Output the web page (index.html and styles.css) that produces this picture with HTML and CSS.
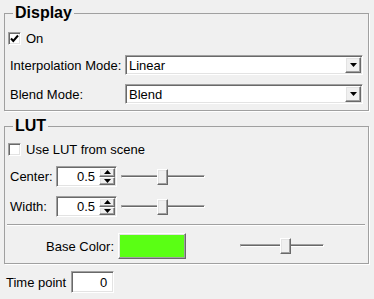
FILE: index.html
```html
<!DOCTYPE html>
<html lang="en">

<head>
    <meta charset="UTF-8">
    <title>Display Properties</title>
    <link rel="stylesheet" href="styles.css">
</head>

<body>
    <fieldset class="group group-display">
        <legend>Display</legend>
        <div class="check-row">
            <span class="checkbox">
                <svg width="9" height="9" viewBox="0 0 9 9"><path d="M1 4.5 L3.3 7 L8 1.5" fill="none" stroke="#000" stroke-width="2"/></svg>
            </span>
            <span>On</span>
        </div>
        <div class="form-grid">
            <span class="field-label">Interpolation Mode:</span>
            <div class="combo">
                <span class="combo-text">Linear</span>
                <span class="raised combo-button">
                    <svg width="7" height="4" viewBox="0 0 7 4"><path d="M0 0 H7 L3.5 4 Z" fill="#000"/></svg>
                </span>
            </div>
            <span class="field-label">Blend Mode:</span>
            <div class="combo">
                <span class="combo-text">Blend</span>
                <span class="raised combo-button">
                    <svg width="7" height="4" viewBox="0 0 7 4"><path d="M0 0 H7 L3.5 4 Z" fill="#000"/></svg>
                </span>
            </div>
        </div>
    </fieldset>

    <fieldset class="group group-lut">
        <legend>LUT</legend>
        <div class="check-row">
            <span class="checkbox"></span>
            <span>Use LUT from scene</span>
        </div>
        <div class="spin-rows">
            <div class="spin-row">
                <span class="spin-label">Center:</span>
                <div class="spin">
                    <span class="spin-value">0.5</span>
                    <span class="spin-buttons">
                        <span class="raised spin-button"><svg width="7" height="4" viewBox="0 0 7 4"><path d="M0 4 H7 L3.5 0 Z" fill="#000"/></svg></span>
                        <span class="raised spin-button"><svg width="7" height="4" viewBox="0 0 7 4"><path d="M0 0 H7 L3.5 4 Z" fill="#000"/></svg></span>
                    </span>
                </div>
                <div class="slider">
                    <span class="slider-track"></span>
                    <span class="raised slider-handle" style="left: 43%;"></span>
                </div>
            </div>
            <div class="spin-row">
                <span class="spin-label">Width:</span>
                <div class="spin">
                    <span class="spin-value">0.5</span>
                    <span class="spin-buttons">
                        <span class="raised spin-button"><svg width="7" height="4" viewBox="0 0 7 4"><path d="M0 4 H7 L3.5 0 Z" fill="#000"/></svg></span>
                        <span class="raised spin-button"><svg width="7" height="4" viewBox="0 0 7 4"><path d="M0 0 H7 L3.5 4 Z" fill="#000"/></svg></span>
                    </span>
                </div>
                <div class="slider">
                    <span class="slider-track"></span>
                    <span class="raised slider-handle" style="left: 43%;"></span>
                </div>
            </div>
        </div>
        <div class="separator"></div>
        <div class="color-row">
            <span class="color-label">Base Color:</span>
            <span class="color-button"></span>
            <div class="slider slider-color">
                <span class="slider-track"></span>
                <span class="raised slider-handle" style="left: 48%;"></span>
            </div>
        </div>
    </fieldset>

    <div class="time-row">
        <span>Time point</span>
        <span class="time-input">0</span>
    </div>
</body>

</html>
```

FILE: styles.css
```css
body {
    margin: 0;
    padding-top: 4px;
    background-color: #f0f0f0;
    color: #000;
    font-family: "Liberation Sans", Arial, sans-serif;
    font-size: 13px;
}

/* group boxes */

.group {
    margin: 0 5px 0 4px;
    padding: 0 5px 6px 4px;
    border: 1px solid #a0a0a0;
    box-shadow: 1px 1px 0 #fff;
    min-width: 0;
}

.group legend {
    margin-left: 4px;
    padding: 0 2px;
    font-size: 16px;
    font-weight: bold;
    line-height: 18px;
}

.group-lut {
    margin-top: 6px;
    padding-bottom: 4px;
}

/* shared bevels */

.sunken {
    border: 1px solid;
}

.raised {
    box-sizing: border-box;
    display: flex;
    align-items: center;
    justify-content: center;
    background-color: #f0f0f0;
    border: 1px solid;
    border-color: #fff #696969 #696969 #fff;
    box-shadow: inset -1px -1px 0 #a0a0a0, inset 1px 1px 0 #e3e3e3;
}

/* checkbox rows */

.check-row {
    display: flex;
    align-items: center;
    gap: 5px;
    height: 20px;
    margin-top: 6px;
    margin-left: -1px;
}

.group-lut .check-row {
    margin-top: 4px;
}

.checkbox {
    box-sizing: border-box;
    width: 13px;
    height: 13px;
    display: flex;
    align-items: center;
    justify-content: center;
    background-color: #fff;
    border: 1px solid;
    border-color: #a0a0a0 #fff #fff #a0a0a0;
    box-shadow: inset 1px 1px 0 #696969, inset -1px -1px 0 #e3e3e3;
}

/* combo boxes */

.form-grid {
    display: grid;
    grid-template-columns: 116px 1fr;
    align-items: center;
    row-gap: 9px;
    margin-top: 7px;
}

.field-label {
    padding-left: 1px;
}

.combo {
    box-sizing: border-box;
    height: 20px;
    display: flex;
    align-items: center;
    padding: 1px;
    background-color: #fff;
    border: 1px solid;
    border-color: #a0a0a0 #fff #fff #a0a0a0;
    box-shadow: inset 1px 1px 0 #696969, inset -1px -1px 0 #e3e3e3;
}

.combo-text {
    flex: 1;
    padding-left: 2px;
}

.combo-button {
    width: 16px;
    height: 16px;
}

/* spin boxes and sliders */

.spin-rows {
    display: flex;
    flex-direction: column;
    gap: 9px;
    margin-top: 7px;
}

.spin-row {
    display: flex;
    align-items: center;
}

.spin-label {
    width: 47px;
    padding-left: 1px;
    box-sizing: border-box;
}

.spin {
    box-sizing: border-box;
    width: 61px;
    height: 21px;
    display: flex;
    align-items: stretch;
    padding: 1px;
    background-color: #fff;
    border: 1px solid;
    border-color: #a0a0a0 #fff #fff #a0a0a0;
    box-shadow: inset 1px 1px 0 #696969, inset -1px -1px 0 #e3e3e3;
}

.spin-value {
    flex: 1;
    display: flex;
    align-items: center;
    justify-content: flex-end;
    padding-right: 4px;
}

.spin-buttons {
    width: 16px;
    display: flex;
    flex-direction: column;
}

.spin-button {
    flex: 1;
}

.slider {
    position: relative;
    width: 84px;
    height: 16px;
    margin-left: 4px;
}

.slider-track {
    position: absolute;
    left: 0;
    right: 0;
    top: 6px;
    height: 1px;
    background-color: #696969;
    border: 1px solid;
    border-color: #a0a0a0 #fff #fff #a0a0a0;
}

.slider-handle {
    position: absolute;
    top: 0;
    width: 11px;
    height: 16px;
}

/* base colour */

.separator {
    margin: 7px -2px 0 -2px;
    border-top: 1px solid #a0a0a0;
    border-bottom: 1px solid #fff;
}

.color-row {
    display: flex;
    align-items: center;
    margin-top: 7px;
}

.color-label {
    width: 105px;
    text-align: right;
}

.color-button {
    box-sizing: border-box;
    width: 68px;
    height: 26px;
    margin-left: 4px;
    background-color: #5aff14;
    border: 1px solid;
    border-color: #fff #696969 #696969 #fff;
    box-shadow: inset -1px -1px 0 #a0a0a0, inset 1px 1px 0 #e3e3e3;
}

.slider-color {
    margin-left: 54px;
}

/* time point */

.time-row {
    display: flex;
    align-items: center;
    gap: 5px;
    margin: 7px 0 0 6px;
}

.time-input {
    box-sizing: border-box;
    width: 43px;
    height: 22px;
    display: flex;
    align-items: center;
    justify-content: flex-end;
    padding-right: 6px;
    background-color: #fff;
    border: 1px solid;
    border-color: #a0a0a0 #fff #fff #a0a0a0;
    box-shadow: inset 1px 1px 0 #696969, inset -1px -1px 0 #e3e3e3;
}
```
